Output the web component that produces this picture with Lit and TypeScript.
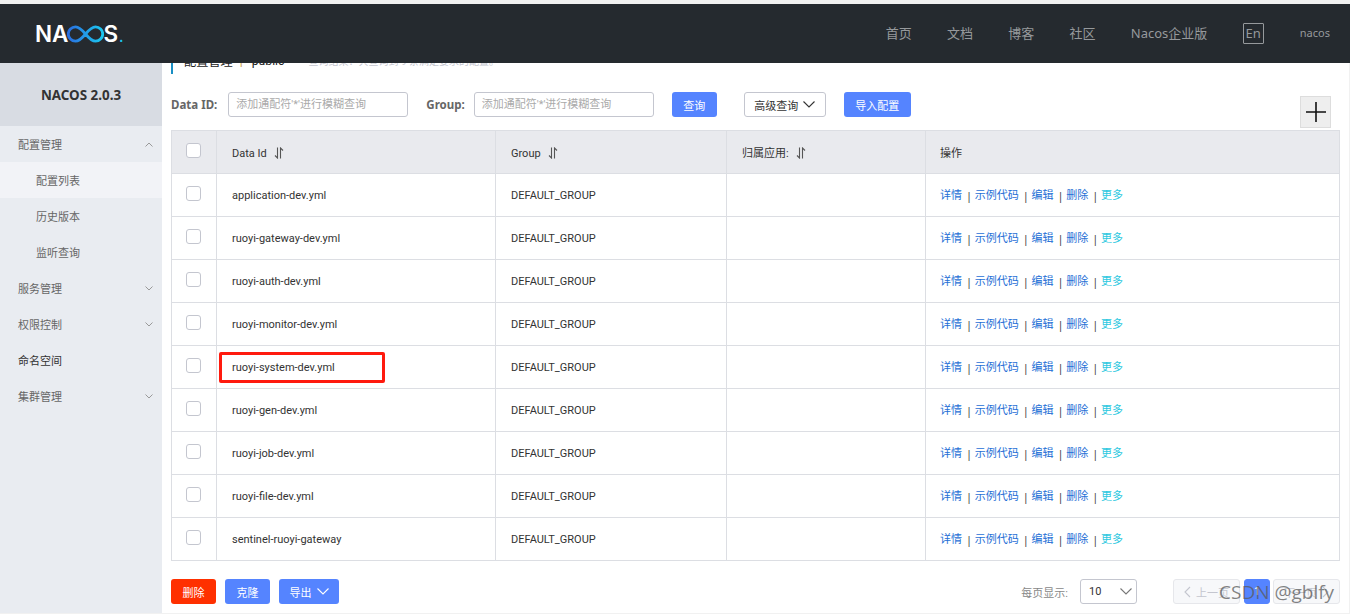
import { LitElement, css, html, svg } from "lit";
import { customElement } from "lit/decorators.js";

const NAV = ["首页", "文档", "博客", "社区", "Nacos企业版"];
const ROWS = [
  "application-dev.yml",
  "ruoyi-gateway-dev.yml",
  "ruoyi-auth-dev.yml",
  "ruoyi-monitor-dev.yml",
  "ruoyi-system-dev.yml",
  "ruoyi-gen-dev.yml",
  "ruoyi-job-dev.yml",
  "ruoyi-file-dev.yml",
  "sentinel-ruoyi-gateway",
];
const PLACEHOLDER = "添加通配符'*'进行模糊查询";

const chevron = (up = false) => html`<svg class="chev" width="8" height="5" viewBox="0 0 8 5">
  <path d=${up ? "M.5 4.5L4 1L7.5 4.5" : "M.5 .5L4 4L7.5 .5"} fill="none" stroke="currentColor" stroke-width="1"></path>
</svg>`;

const bigChevron = html`<svg class="bigchev" width="12" height="7" viewBox="0 0 12 7">
  <path d="M.5 .5L6 6L11.5 .5" fill="none" stroke="currentColor" stroke-width="1.1"></path>
</svg>`;

const sideArrow = (next = false) => html`<svg width="7" height="12" viewBox="0 0 7 12">
  <path d=${next ? "M1 1L6 6L1 11" : "M6 1L1 6L6 11"} fill="none" stroke="currentColor" stroke-width="1.1"></path>
</svg>`;

const sortIcon = html`<svg class="sort" width="10" height="12" viewBox="0 0 10 12">
  <path d="M3.5 .5V11L1 8.5M6.5 11.5V1L9 3.5" fill="none" stroke="#555" stroke-width="1.1"></path>
</svg>`;

@customElement("app-root")
class AppRoot extends LitElement {
  static styles = css`
    :host {
      display: block;
      width: 1350px;
      height: 614px;
      overflow: hidden;
      box-sizing: border-box;
      padding: 4px 0 1px;
      background: #f1f1f1;
      font-family: "Noto Sans", "Noto Sans CJK SC", sans-serif;
      font-size: 11px;
      color: #333;
      position: relative;
    }
    .header {
      height: 59px;
      background: #252a2f;
      display: flex;
      align-items: center;
      padding: 0 20px 0 35px;
      color: #96999c;
    }
    .logo {
      display: flex;
      align-items: center;
      height: 20px;
      color: #fff;
      font-family: "Inter", sans-serif;
      font-size: 22.5px;
      font-weight: 600;
      line-height: 20px;
    }
    .logo svg {
      margin: 0 -1px 0 -1px;
    }
    .logo i {
      font-style: normal;
      color: #1cc4ee;
      font-size: 14px;
      margin-top: 6px;
      margin-left: 1px;
    }
    .nav {
      margin-left: auto;
      display: flex;
      align-items: center;
      gap: 35.25px;
      font-size: 13px;
    }
    .nav span {
      padding-bottom: 2px;
    }
    .nav .en {
      width: 21px;
      height: 21px;
      box-sizing: border-box;
      border: 1px solid #96999c;
      border-radius: 1px;
      padding: 0 0 1px;
      display: flex;
      align-items: center;
      justify-content: center;
      font-size: 13px;
    }
    .nav .user {
      font-size: 11px;
      margin-left: 1px;
    }
    .body {
      display: flex;
      height: 550px;
    }
    .side {
      width: 162px;
      flex: none;
      background: #e9ecf1;
      color: #666;
    }
    .brand {
      height: 63px;
      background: #d8dce3;
      display: flex;
      align-items: center;
      justify-content: center;
      font-size: 13.4px;
      font-weight: 700;
      color: #333;
    }
    .item {
      height: 36px;
      display: flex;
      align-items: center;
      justify-content: space-between;
      padding: 0 9px 0 18px;
    }
    .item.sub {
      padding-left: 36px;
    }
    .item.on {
      background: #f2f3f7;
    }
    .item.dark {
      color: #333;
    }
    .chev {
      color: #999;
    }
    .main {
      flex: 1;
      min-width: 0;
      background: #fff;
      margin-right: 1px;
      padding: 0 9px;
      overflow: hidden;
      font-family: Roboto, "Noto Sans CJK SC", sans-serif;
    }
    .title {
      margin-top: -13px;
      height: 24px;
      box-sizing: border-box;
      border-left: 2px solid #1a8fc4;
      padding: 0 0 3px 11px;
      display: flex;
      align-items: center;
      font-size: 12.2px;
      color: #222;
    }
    .title b {
      font-weight: 400;
      color: #c99a3c;
      margin: 0 9px 0 7px;
    }
    .title span {
      margin-left: 24px;
      font-size: 10px;
      color: #c4c6cf;
    }
    .toolbar {
      margin-top: 18px;
      height: 38px;
      display: flex;
      align-items: flex-start;
    }
    .label {
      height: 25px;
      line-height: 25px;
      font-family: "Noto Sans", sans-serif;
      font-size: 11.5px;
      font-weight: 700;
      color: #666;
    }
    .input {
      width: 180px;
      height: 25px;
      box-sizing: border-box;
      border: 1px solid #c4c6cf;
      border-radius: 3px;
      padding: 0 7px;
      line-height: 23px;
      color: #aaa;
      margin: 0 18px 0 11px;
    }
    .input.second {
      margin-left: 9px;
    }
    .btn {
      height: 25px;
      box-sizing: border-box;
      border-radius: 3px;
      background: #5584ff;
      color: #fff;
      display: flex;
      align-items: center;
      justify-content: center;
      gap: 5px;
      flex: none;
    }
    .btn.ghost {
      background: #fff;
      border: 1px solid #c4c6cf;
      color: #333;
    }
    .btn.red {
      background: #ff3000;
    }
    .plus {
      margin: 4px 9px 0 auto;
      width: 31px;
      height: 32px;
      box-sizing: border-box;
      background: #eee;
      border: 1px solid #ddd;
      display: flex;
      align-items: center;
      justify-content: center;
    }
    table {
      width: 1168px;
      border-collapse: collapse;
      table-layout: fixed;
    }
    th,
    td {
      height: 43px;
      box-sizing: border-box;
      border: 1px solid #dcdee3;
      padding: 2px 0 0 15px;
      line-height: 16px;
      font-weight: 400;
      text-align: left;
      position: relative;
    }
    th {
      background: #e9eaee;
      padding-top: 4px;
    }
    th .sort {
      margin-left: 5px;
      vertical-align: -2px;
    }
    th.check,
    td.check {
      padding: 0 0 0 14px;
    }
    th.last,
    td.last {
      padding-left: 14px;
    }
    .box {
      display: block;
      width: 15px;
      height: 15px;
      box-sizing: border-box;
      border: 1px solid #c4c6cf;
      border-radius: 3px;
      background: #fff;
      margin-top: -3px;
    }
    .mark {
      position: absolute;
      left: 2px;
      top: 6px;
      width: 166px;
      height: 31px;
      box-sizing: border-box;
      border: 3px solid #ff1a0e;
      border-radius: 2px;
    }
    .ops {
      display: flex;
      gap: 4px;
      color: #444;
    }
    .ops span {
      width: 4.75px;
      text-align: center;
      font-family: "Noto Sans", sans-serif;
    }
    .ops a {
      color: #1e6fd6;
    }
    .ops a.more {
      color: #2cc8e0;
    }
    .foot {
      margin-top: 18px;
      height: 25px;
      display: flex;
      align-items: center;
      gap: 9px;
    }
    .size {
      margin-left: auto;
      color: #888;
      margin-right: 3px;
    }
    .select {
      width: 57px;
      height: 25px;
      box-sizing: border-box;
      border: 1px solid #c4c6cf;
      border-radius: 3px;
      display: flex;
      align-items: center;
      justify-content: space-between;
      padding: 0 4px 0 8px;
      margin-right: 27px;
    }
    .select .bigchev {
      color: #777;
    }
    .pager {
      display: flex;
    }
    .pager div {
      height: 25px;
      box-sizing: border-box;
      border-radius: 3px;
      display: flex;
      align-items: center;
      justify-content: center;
      gap: 5px;
      width: 67px;
      background: #f7f8fa;
      border: 1px solid #e6e7eb;
      color: #c4c6cf;
    }
    .pager div.cur {
      width: 26px;
      margin: 0 3px 0 4px;
      background: #5584ff;
      border-color: #5584ff;
      color: #fff;
    }
    .water {
      position: absolute;
      left: 1219px;
      top: 579px;
      font-family: "Open Sans", sans-serif;
      font-size: 19px;
      line-height: 26px;
      color: rgba(90, 90, 90, 0.75);
    }
  `;

  renderLogo() {
    return html`<div class="logo">
      <span>NA</span>
      <svg width="37" height="18" viewBox="0 0 37 18">
        <defs>
          <linearGradient id="inf" x1="0" x2="1" y1="0" y2="0">
            <stop offset="0" stop-color="#2a6fe0"></stop>
            <stop offset="1" stop-color="#1bc8f0"></stop>
          </linearGradient>
        </defs>
        ${svg`<path d="M18.5 9C14 3.5 11 1.8 8.5 1.8a7.2 7.2 0 0 0 0 14.4C11 16.2 14 14.5 18.5 9C23 3.5 26 1.8 28.5 1.8a7.2 7.2 0 0 1 0 14.4C26 16.2 23 14.5 18.5 9Z" fill="none" stroke="url(#inf)" stroke-width="2.8"></path>`}
      </svg>
      <span>S</span><i>.</i>
    </div>`;
  }

  renderSide() {
    return html`<div class="side">
      <div class="brand">NACOS 2.0.3</div>
      <div class="item">配置管理 ${chevron(true)}</div>
      <div class="item sub on">配置列表</div>
      <div class="item sub">历史版本</div>
      <div class="item sub">监听查询</div>
      <div class="item">服务管理 ${chevron()}</div>
      <div class="item">权限控制 ${chevron()}</div>
      <div class="item dark">命名空间</div>
      <div class="item">集群管理 ${chevron()}</div>
    </div>`;
  }

  renderRow(name: string) {
    return html`<tr>
      <td class="check"><span class="box"></span></td>
      <td>
        ${name}
        ${name === "ruoyi-system-dev.yml" ? html`<div class="mark"></div>` : ""}
      </td>
      <td>DEFAULT_GROUP</td>
      <td></td>
      <td class="last">
        <div class="ops">
          <a>详情</a><span>|</span><a>示例代码</a><span>|</span><a>编辑</a><span>|</span><a>删除</a><span>|</span><a class="more">更多</a>
        </div>
      </td>
    </tr>`;
  }

  render() {
    return html`
      <div class="header">
        ${this.renderLogo()}
        <div class="nav">
          ${NAV.map((n) => html`<span>${n}</span>`)}
          <span class="en">En</span>
          <span class="user">nacos</span>
        </div>
      </div>
      <div class="body">
        ${this.renderSide()}
        <div class="main">
          <div class="title">配置管理<b>|</b>public<span>查询结果：共查询到 9 条满足要求的配置。</span></div>
          <div class="toolbar">
            <span class="label">Data ID:</span>
            <div class="input">${PLACEHOLDER}</div>
            <span class="label">Group:</span>
            <div class="input second">${PLACEHOLDER}</div>
            <div class="btn" style="width:45px">查询</div>
            <div class="btn ghost" style="width:82px;margin-left:27px">高级查询 ${bigChevron}</div>
            <div class="btn" style="width:67px;margin-left:18px">导入配置</div>
            <div class="plus">
              <svg width="20" height="20" viewBox="0 0 20 20"><path d="M10 0V20M0 10H20" stroke="#111" stroke-width="1.6"></path></svg>
            </div>
          </div>
          <table>
            <colgroup>
              <col style="width:45px" /><col style="width:279px" /><col style="width:231px" /><col style="width:199px" /><col style="width:414px" />
            </colgroup>
            <thead>
              <tr>
                <th class="check"><span class="box"></span></th>
                <th>Data Id ${sortIcon}</th>
                <th>Group ${sortIcon}</th>
                <th>归属应用: ${sortIcon}</th>
                <th class="last">操作</th>
              </tr>
            </thead>
            <tbody>
              ${ROWS.map((r) => this.renderRow(r))}
            </tbody>
          </table>
          <div class="foot">
            <div class="btn red" style="width:45px">删除</div>
            <div class="btn" style="width:45px">克隆</div>
            <div class="btn" style="width:60px">导出 ${bigChevron}</div>
            <span class="size">每页显示:</span>
            <div class="select">10 ${bigChevron}</div>
            <div class="pager">
              <div>${sideArrow()}上一页</div>
              <div class="cur">1</div>
              <div>下一页${sideArrow(true)}</div>
            </div>
          </div>
        </div>
      </div>
      <div class="water">CSDN @gblfy</div>
    `;
  }
}
